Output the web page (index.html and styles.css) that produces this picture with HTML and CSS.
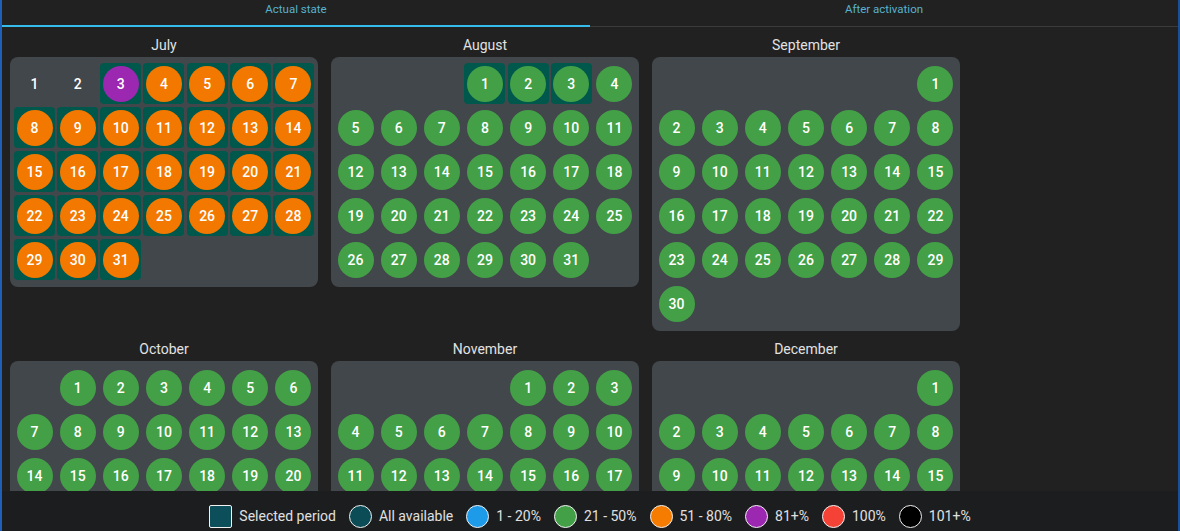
FILE: index.html
```html
<!DOCTYPE html>
<html>
<head>
<meta charset="utf-8">
<link rel="stylesheet" href="styles.css">
</head>
<body>
<div class="frame">
  <div class="tabs">
    <div class="tab active">Actual state</div>
    <div class="tab">After activation</div>
  </div>
  <div class="months">
    <div class="month">
      <div class="title">July</div>
      <div class="card">
        <div class="d"><span class="n">1</span></div>
        <div class="d"><span class="n">2</span></div>
        <div class="d s"><span class="c p">3</span></div>
        <div class="d s"><span class="c o">4</span></div>
        <div class="d s"><span class="c o">5</span></div>
        <div class="d s"><span class="c o">6</span></div>
        <div class="d s"><span class="c o">7</span></div>
        <div class="d s"><span class="c o">8</span></div>
        <div class="d s"><span class="c o">9</span></div>
        <div class="d s"><span class="c o">10</span></div>
        <div class="d s"><span class="c o">11</span></div>
        <div class="d s"><span class="c o">12</span></div>
        <div class="d s"><span class="c o">13</span></div>
        <div class="d s"><span class="c o">14</span></div>
        <div class="d s"><span class="c o">15</span></div>
        <div class="d s"><span class="c o">16</span></div>
        <div class="d s"><span class="c o">17</span></div>
        <div class="d s"><span class="c o">18</span></div>
        <div class="d s"><span class="c o">19</span></div>
        <div class="d s"><span class="c o">20</span></div>
        <div class="d s"><span class="c o">21</span></div>
        <div class="d s"><span class="c o">22</span></div>
        <div class="d s"><span class="c o">23</span></div>
        <div class="d s"><span class="c o">24</span></div>
        <div class="d s"><span class="c o">25</span></div>
        <div class="d s"><span class="c o">26</span></div>
        <div class="d s"><span class="c o">27</span></div>
        <div class="d s"><span class="c o">28</span></div>
        <div class="d s"><span class="c o">29</span></div>
        <div class="d s"><span class="c o">30</span></div>
        <div class="d s"><span class="c o">31</span></div>
      </div>
    </div>
    <div class="month">
      <div class="title">August</div>
      <div class="card">
        <div class="d"></div><div class="d"></div><div class="d"></div>
        <div class="d s"><span class="c g">1</span></div>
        <div class="d s"><span class="c g">2</span></div>
        <div class="d s"><span class="c g">3</span></div>
        <div class="d"><span class="c g">4</span></div>
        <div class="d"><span class="c g">5</span></div>
        <div class="d"><span class="c g">6</span></div>
        <div class="d"><span class="c g">7</span></div>
        <div class="d"><span class="c g">8</span></div>
        <div class="d"><span class="c g">9</span></div>
        <div class="d"><span class="c g">10</span></div>
        <div class="d"><span class="c g">11</span></div>
        <div class="d"><span class="c g">12</span></div>
        <div class="d"><span class="c g">13</span></div>
        <div class="d"><span class="c g">14</span></div>
        <div class="d"><span class="c g">15</span></div>
        <div class="d"><span class="c g">16</span></div>
        <div class="d"><span class="c g">17</span></div>
        <div class="d"><span class="c g">18</span></div>
        <div class="d"><span class="c g">19</span></div>
        <div class="d"><span class="c g">20</span></div>
        <div class="d"><span class="c g">21</span></div>
        <div class="d"><span class="c g">22</span></div>
        <div class="d"><span class="c g">23</span></div>
        <div class="d"><span class="c g">24</span></div>
        <div class="d"><span class="c g">25</span></div>
        <div class="d"><span class="c g">26</span></div>
        <div class="d"><span class="c g">27</span></div>
        <div class="d"><span class="c g">28</span></div>
        <div class="d"><span class="c g">29</span></div>
        <div class="d"><span class="c g">30</span></div>
        <div class="d"><span class="c g">31</span></div>
      </div>
    </div>
    <div class="month">
      <div class="title">September</div>
      <div class="card">
        <div class="d"></div><div class="d"></div><div class="d"></div><div class="d"></div><div class="d"></div><div class="d"></div>
        <div class="d"><span class="c g">1</span></div>
        <div class="d"><span class="c g">2</span></div>
        <div class="d"><span class="c g">3</span></div>
        <div class="d"><span class="c g">4</span></div>
        <div class="d"><span class="c g">5</span></div>
        <div class="d"><span class="c g">6</span></div>
        <div class="d"><span class="c g">7</span></div>
        <div class="d"><span class="c g">8</span></div>
        <div class="d"><span class="c g">9</span></div>
        <div class="d"><span class="c g">10</span></div>
        <div class="d"><span class="c g">11</span></div>
        <div class="d"><span class="c g">12</span></div>
        <div class="d"><span class="c g">13</span></div>
        <div class="d"><span class="c g">14</span></div>
        <div class="d"><span class="c g">15</span></div>
        <div class="d"><span class="c g">16</span></div>
        <div class="d"><span class="c g">17</span></div>
        <div class="d"><span class="c g">18</span></div>
        <div class="d"><span class="c g">19</span></div>
        <div class="d"><span class="c g">20</span></div>
        <div class="d"><span class="c g">21</span></div>
        <div class="d"><span class="c g">22</span></div>
        <div class="d"><span class="c g">23</span></div>
        <div class="d"><span class="c g">24</span></div>
        <div class="d"><span class="c g">25</span></div>
        <div class="d"><span class="c g">26</span></div>
        <div class="d"><span class="c g">27</span></div>
        <div class="d"><span class="c g">28</span></div>
        <div class="d"><span class="c g">29</span></div>
        <div class="d"><span class="c g">30</span></div>
      </div>
    </div>
    <div class="month">
      <div class="title">October</div>
      <div class="card">
        <div class="d"></div>
        <div class="d"><span class="c g">1</span></div>
        <div class="d"><span class="c g">2</span></div>
        <div class="d"><span class="c g">3</span></div>
        <div class="d"><span class="c g">4</span></div>
        <div class="d"><span class="c g">5</span></div>
        <div class="d"><span class="c g">6</span></div>
        <div class="d"><span class="c g">7</span></div>
        <div class="d"><span class="c g">8</span></div>
        <div class="d"><span class="c g">9</span></div>
        <div class="d"><span class="c g">10</span></div>
        <div class="d"><span class="c g">11</span></div>
        <div class="d"><span class="c g">12</span></div>
        <div class="d"><span class="c g">13</span></div>
        <div class="d"><span class="c g">14</span></div>
        <div class="d"><span class="c g">15</span></div>
        <div class="d"><span class="c g">16</span></div>
        <div class="d"><span class="c g">17</span></div>
        <div class="d"><span class="c g">18</span></div>
        <div class="d"><span class="c g">19</span></div>
        <div class="d"><span class="c g">20</span></div>
        <div class="d"><span class="c g">21</span></div>
        <div class="d"><span class="c g">22</span></div>
        <div class="d"><span class="c g">23</span></div>
        <div class="d"><span class="c g">24</span></div>
        <div class="d"><span class="c g">25</span></div>
        <div class="d"><span class="c g">26</span></div>
        <div class="d"><span class="c g">27</span></div>
        <div class="d"><span class="c g">28</span></div>
        <div class="d"><span class="c g">29</span></div>
        <div class="d"><span class="c g">30</span></div>
        <div class="d"><span class="c g">31</span></div>
      </div>
    </div>
    <div class="month">
      <div class="title">November</div>
      <div class="card">
        <div class="d"></div><div class="d"></div><div class="d"></div><div class="d"></div>
        <div class="d"><span class="c g">1</span></div>
        <div class="d"><span class="c g">2</span></div>
        <div class="d"><span class="c g">3</span></div>
        <div class="d"><span class="c g">4</span></div>
        <div class="d"><span class="c g">5</span></div>
        <div class="d"><span class="c g">6</span></div>
        <div class="d"><span class="c g">7</span></div>
        <div class="d"><span class="c g">8</span></div>
        <div class="d"><span class="c g">9</span></div>
        <div class="d"><span class="c g">10</span></div>
        <div class="d"><span class="c g">11</span></div>
        <div class="d"><span class="c g">12</span></div>
        <div class="d"><span class="c g">13</span></div>
        <div class="d"><span class="c g">14</span></div>
        <div class="d"><span class="c g">15</span></div>
        <div class="d"><span class="c g">16</span></div>
        <div class="d"><span class="c g">17</span></div>
        <div class="d"><span class="c g">18</span></div>
        <div class="d"><span class="c g">19</span></div>
        <div class="d"><span class="c g">20</span></div>
        <div class="d"><span class="c g">21</span></div>
        <div class="d"><span class="c g">22</span></div>
        <div class="d"><span class="c g">23</span></div>
        <div class="d"><span class="c g">24</span></div>
        <div class="d"><span class="c g">25</span></div>
        <div class="d"><span class="c g">26</span></div>
        <div class="d"><span class="c g">27</span></div>
        <div class="d"><span class="c g">28</span></div>
        <div class="d"><span class="c g">29</span></div>
        <div class="d"><span class="c g">30</span></div>
      </div>
    </div>
    <div class="month">
      <div class="title">December</div>
      <div class="card">
        <div class="d"></div><div class="d"></div><div class="d"></div><div class="d"></div><div class="d"></div><div class="d"></div>
        <div class="d"><span class="c g">1</span></div>
        <div class="d"><span class="c g">2</span></div>
        <div class="d"><span class="c g">3</span></div>
        <div class="d"><span class="c g">4</span></div>
        <div class="d"><span class="c g">5</span></div>
        <div class="d"><span class="c g">6</span></div>
        <div class="d"><span class="c g">7</span></div>
        <div class="d"><span class="c g">8</span></div>
        <div class="d"><span class="c g">9</span></div>
        <div class="d"><span class="c g">10</span></div>
        <div class="d"><span class="c g">11</span></div>
        <div class="d"><span class="c g">12</span></div>
        <div class="d"><span class="c g">13</span></div>
        <div class="d"><span class="c g">14</span></div>
        <div class="d"><span class="c g">15</span></div>
        <div class="d"><span class="c g">16</span></div>
        <div class="d"><span class="c g">17</span></div>
        <div class="d"><span class="c g">18</span></div>
        <div class="d"><span class="c g">19</span></div>
        <div class="d"><span class="c g">20</span></div>
        <div class="d"><span class="c g">21</span></div>
        <div class="d"><span class="c g">22</span></div>
        <div class="d"><span class="c g">23</span></div>
        <div class="d"><span class="c g">24</span></div>
        <div class="d"><span class="c g">25</span></div>
        <div class="d"><span class="c g">26</span></div>
        <div class="d"><span class="c g">27</span></div>
        <div class="d"><span class="c g">28</span></div>
        <div class="d"><span class="c g">29</span></div>
        <div class="d"><span class="c g">30</span></div>
        <div class="d"><span class="c g">31</span></div>
      </div>
    </div>
  </div>
  <div class="legend">
    <div class="item"><span class="ico sq"></span>Selected period</div>
    <div class="item"><span class="ico av"></span>All available</div>
    <div class="item"><span class="ico bl"></span>1 - 20%</div>
    <div class="item"><span class="ico gr"></span>21 - 50%</div>
    <div class="item"><span class="ico or"></span>51 - 80%</div>
    <div class="item"><span class="ico pu"></span>81+%</div>
    <div class="item"><span class="ico re"></span>100%</div>
    <div class="item"><span class="ico bk"></span>101+%</div>
  </div>
</div>
</body>
</html>
```
FILE: styles.css
```css
html, body {
  margin: 0;
  padding: 0;
  height: 100%;
}
body {
  background: #212121;
  font-family: Roboto, "Liberation Sans", Arial, sans-serif;
  overflow: hidden;
}
.frame {
  position: relative;
  height: 531px;
  box-sizing: border-box;
  border-left: 2px solid #1f5fb8;
  border-right: 2px solid #1b4f96;
  overflow: hidden;
}
.tabs {
  display: flex;
  border-bottom: 1px solid #3a3b3c;
}
.tab {
  flex: 1;
  height: 25px;
  line-height: 19px;
  text-align: center;
  font-size: 11.5px;
  color: #58b2cf;
  border-bottom: 2px solid transparent;
  margin-bottom: -1px;
}
.tab.active {
  border-bottom-color: #35bcec;
}
.months {
  display: grid;
  grid-template-columns: repeat(3, 308px);
  column-gap: 13px;
  align-items: start;
  padding-left: 8px;
}
.title {
  padding-top: 10px;
  padding-bottom: 3px;
  line-height: 17px;
  font-size: 14px;
  color: #e2e2e2;
  text-align: center;
}
.card {
  background: #42474b;
  border-radius: 8px;
  padding: 6px 4px 7px;
  display: grid;
  grid-template-columns: repeat(7, 41px);
  justify-content: space-between;
  grid-auto-rows: 41px;
  row-gap: 3px;
}
.d {
  display: flex;
  align-items: center;
  justify-content: center;
  border-radius: 4px;
}
.d.s {
  background: #00584c;
}
.c, .n {
  width: 36px;
  height: 36px;
  border-radius: 50%;
  display: flex;
  align-items: center;
  justify-content: center;
  color: #fff;
  font-size: 14px;
  font-weight: 500;
}
.c.o { background: #f37800; }
.c.p { background: #9c27b0; }
.c.g { background: #43a047; }
.legend {
  position: absolute;
  left: 0;
  right: 0;
  bottom: 0;
  height: 40px;
  box-sizing: border-box;
  padding-top: 14px;
  background: #1c1d1f;
  display: flex;
  justify-content: center;
  align-items: flex-start;
  gap: 13px;
}
.item {
  display: flex;
  align-items: center;
  gap: 7px;
  font-size: 14px;
  line-height: 23px;
  color: #e0e0e0;
}
.ico {
  width: 23px;
  height: 23px;
  box-sizing: border-box;
  border: 1.5px solid #f2f2f2;
  border-radius: 50%;
}
.ico.sq { border-radius: 2px; background: #0c4f5b; }
.ico.av { background: #0c4c57; }
.ico.bl { background: #1e9be8; }
.ico.gr { background: #43a047; }
.ico.or { background: #f57c00; }
.ico.pu { background: #9c27b0; }
.ico.re { background: #f44336; }
.ico.bk { background: #000; }
```
